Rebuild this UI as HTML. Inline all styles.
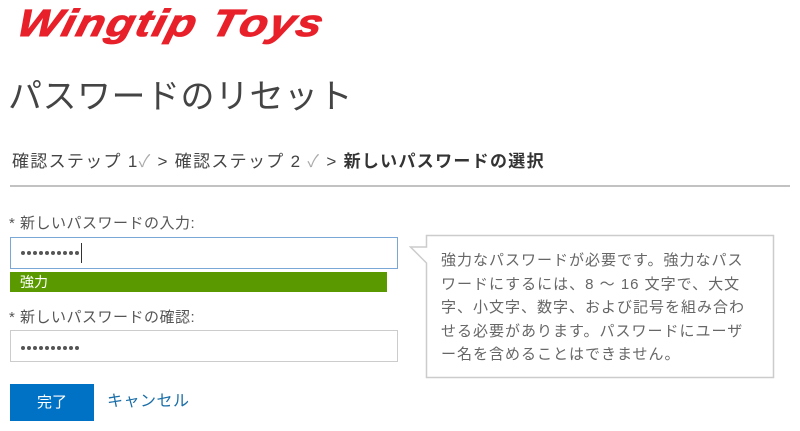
<!DOCTYPE html>
<html><head><meta charset="utf-8"><style>
body{margin:0;width:800px;height:431px;background:#fff;font-family:"Liberation Sans","Noto Sans CJK JP",sans-serif;position:relative;overflow:hidden;color:#444}
.a{position:absolute;white-space:nowrap}
.inp{position:absolute;border:1px solid #ccc;background:#fff;box-sizing:border-box}
.dots{position:absolute;display:flex;gap:2px}
.dots i{display:block;width:4px;height:4px;border-radius:50%;background:#555}
</style></head><body>
<div class="a" style="left:24px;top:2px;font:italic 900 38px/44px 'Liberation Sans',sans-serif;color:#e8202a;letter-spacing:1.5px;transform-origin:left top;transform:scaleX(1.2) skewX(-12deg);-webkit-text-stroke:1px #e8202a">Wingtip Toys</div>
<div class="a" style="left:8px;top:72px;font-size:34px;line-height:50px;color:#444;letter-spacing:0.5px">パスワードのリセット</div>
<div class="a" style="left:12px;top:149px;font-size:17px;line-height:26px;color:#444;letter-spacing:1.3px">確認ステップ 1<span style="color:#aaa">✓</span> &gt; 確認ステップ 2 <span style="color:#aaa">✓</span> &gt; <b style="color:#333">新しいパスワードの選択</b></div>
<div class="a" style="left:10px;top:185px;width:780px;height:2px;background:#c2c2c2"></div>
<div class="a" style="left:9px;top:214px;font-size:15px;line-height:20px;color:#555;letter-spacing:0.5px">* 新しいパスワードの入力:</div>
<div class="inp" style="left:10px;top:237px;width:388px;height:32px;border-color:#7aa7d6"></div>
<div class="dots" style="left:21px;top:251px"><i></i><i></i><i></i><i></i><i></i><i></i><i></i><i></i><i></i><i></i></div>
<div class="a" style="left:81px;top:243px;width:1px;height:20px;background:#333"></div>
<div class="a" style="left:10px;top:272px;width:377px;height:20px;background:#5a9a00"></div>
<div class="a" style="left:20px;top:272px;font-size:14px;line-height:20px;color:#fff">強力</div>
<div class="a" style="left:9px;top:308px;font-size:15px;line-height:20px;color:#555;letter-spacing:0.5px">* 新しいパスワードの確認:</div>
<div class="inp" style="left:10px;top:330px;width:388px;height:32px"></div>
<div class="dots" style="left:21px;top:346px"><i></i><i></i><i></i><i></i><i></i><i></i><i></i><i></i><i></i><i></i></div>
<div class="a" style="left:10px;top:384px;width:84px;height:37px;background:#0072c6;color:#fff;font-size:15px;line-height:37px;text-align:center">完了</div>
<div class="a" style="left:107px;top:390px;font-size:16px;line-height:24px;color:#1a6ea8;letter-spacing:0.5px">キャンセル</div>
<svg class="a" style="left:405px;top:234px" width="375" height="146"><path d="M21.5 1.5 H368.5 V143.5 H21.5 V29 L5.5 13 H21.5 Z" fill="#fff" stroke="#ccc" stroke-width="1.5"/></svg>
<div class="a" style="left:441px;top:249px;font-size:15px;line-height:23.5px;color:#666;white-space:normal;width:318px;letter-spacing:1px">強力なパスワードが必要です。強力なパスワードにするには、8 ～ 16 文字で、大文字、小文字、数字、および記号を組み合わせる必要があります。パスワードにユーザー名を含めることはできません。</div>
</body></html>
